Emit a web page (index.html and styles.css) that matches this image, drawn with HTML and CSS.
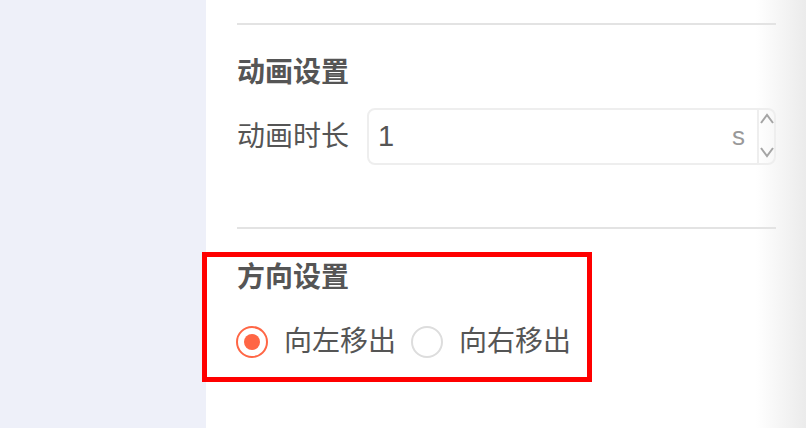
FILE: index.html
```html
<!DOCTYPE html>
<html lang="zh-CN">
  <head>
    <meta charset="UTF-8" />
    <meta name="viewport" content="width=device-width, initial-scale=1.0" />
    <title>动画设置</title>
    <link rel="stylesheet" href="styles.css">
  </head>
  <body>
    <div class="layout">
      <div class="sidebar"></div>

      <div class="panel">
        <hr class="divider" />

        <!-- 动画设置 -->
        <div class="section">
          <h2 class="section-title">动画设置</h2>
          <div class="form-row">
            <label class="form-label">动画时长</label>
            <div class="num-field">
              <span class="num-value">1</span>
              <span class="num-unit">s</span>
              <span class="spinner">
                <svg width="14" height="11" viewBox="0 0 14 11"><path d="M1 10 L7 2 L13 10" fill="none" stroke="#a5a5a5" stroke-width="2"/></svg>
                <svg width="14" height="11" viewBox="0 0 14 11"><path d="M1 1 L7 9 L13 1" fill="none" stroke="#a5a5a5" stroke-width="2"/></svg>
              </span>
            </div>
          </div>
        </div>

        <hr class="divider divider-second" />

        <!-- 方向设置 -->
        <div class="section highlight">
          <h2 class="section-title">方向设置</h2>
          <div class="radio-group">
            <label class="radio checked"><span class="radio-dot"></span>向左移出</label>
            <label class="radio"><span class="radio-dot"></span>向右移出</label>
          </div>
        </div>
      </div>
    </div>
  </body>
</html>
```

FILE: styles.css
```css
body {
  margin: 0;
  padding: 0;
  font-family: "Liberation Sans", "Noto Sans CJK SC", sans-serif;
  color: #555;
}
.layout {
  display: flex;
  height: 428px;
  overflow: hidden;
}
.sidebar {
  width: 206px;
  flex-shrink: 0;
  background: #eef0f9;
}
.panel {
  flex: 1;
  padding: 23px 30px 0 31px;
  background: linear-gradient(to right, #fff 0, #fff calc(100% - 50px), #ebebeb 100%);
}
.divider {
  height: 2px;
  margin: 0;
  border: 0;
  background: #e3e3e3;
}
.divider-second {
  margin-top: 62px;
}
.section-title {
  margin: 28px 0 0;
  font-size: 28px;
  line-height: 40px;
  font-weight: bold;
  color: #555;
}
.form-row {
  display: flex;
  align-items: center;
  margin-top: 15px;
}
.form-label {
  font-size: 28px;
  line-height: 40px;
  margin-right: 18px;
}
.num-field {
  flex: 1;
  display: flex;
  align-items: center;
  height: 57px;
  box-sizing: border-box;
  border: 2px solid #eee;
  border-radius: 8px;
  padding-left: 9px;
}
.num-value {
  flex: 1;
  font-size: 29px;
  color: #555;
}
.num-unit {
  font-size: 26px;
  color: #999;
  margin-right: 12px;
}
.spinner {
  display: flex;
  flex-direction: column;
  justify-content: space-between;
  align-items: center;
  align-self: stretch;
  width: 15px;
  padding: 3px 0 5px;
  border-left: 2px solid #eee;
}
.spinner svg {
  display: block;
}
.highlight {
  width: fit-content;
  margin: 23px 0 0 -35px;
  padding: 1px 16px 15px 29px;
  border: 5px solid #ff0000;
}
.highlight .section-title {
  margin-top: 0;
  margin-left: 1px;
}
.radio-group {
  display: flex;
  margin-top: 24px;
}
.radio {
  display: flex;
  align-items: center;
  font-size: 28px;
  line-height: 40px;
  margin-right: 15px;
}
.radio:last-child {
  margin-right: 0;
}
.radio-dot {
  width: 32px;
  height: 32px;
  box-sizing: border-box;
  border: 2px solid #ddd;
  border-radius: 50%;
  margin-right: 16px;
  display: flex;
  align-items: center;
  justify-content: center;
}
.radio.checked .radio-dot {
  border-color: #ff6645;
}
.radio.checked .radio-dot::after {
  content: "";
  width: 16px;
  height: 16px;
  border-radius: 50%;
  background: #ff6645;
}
```
